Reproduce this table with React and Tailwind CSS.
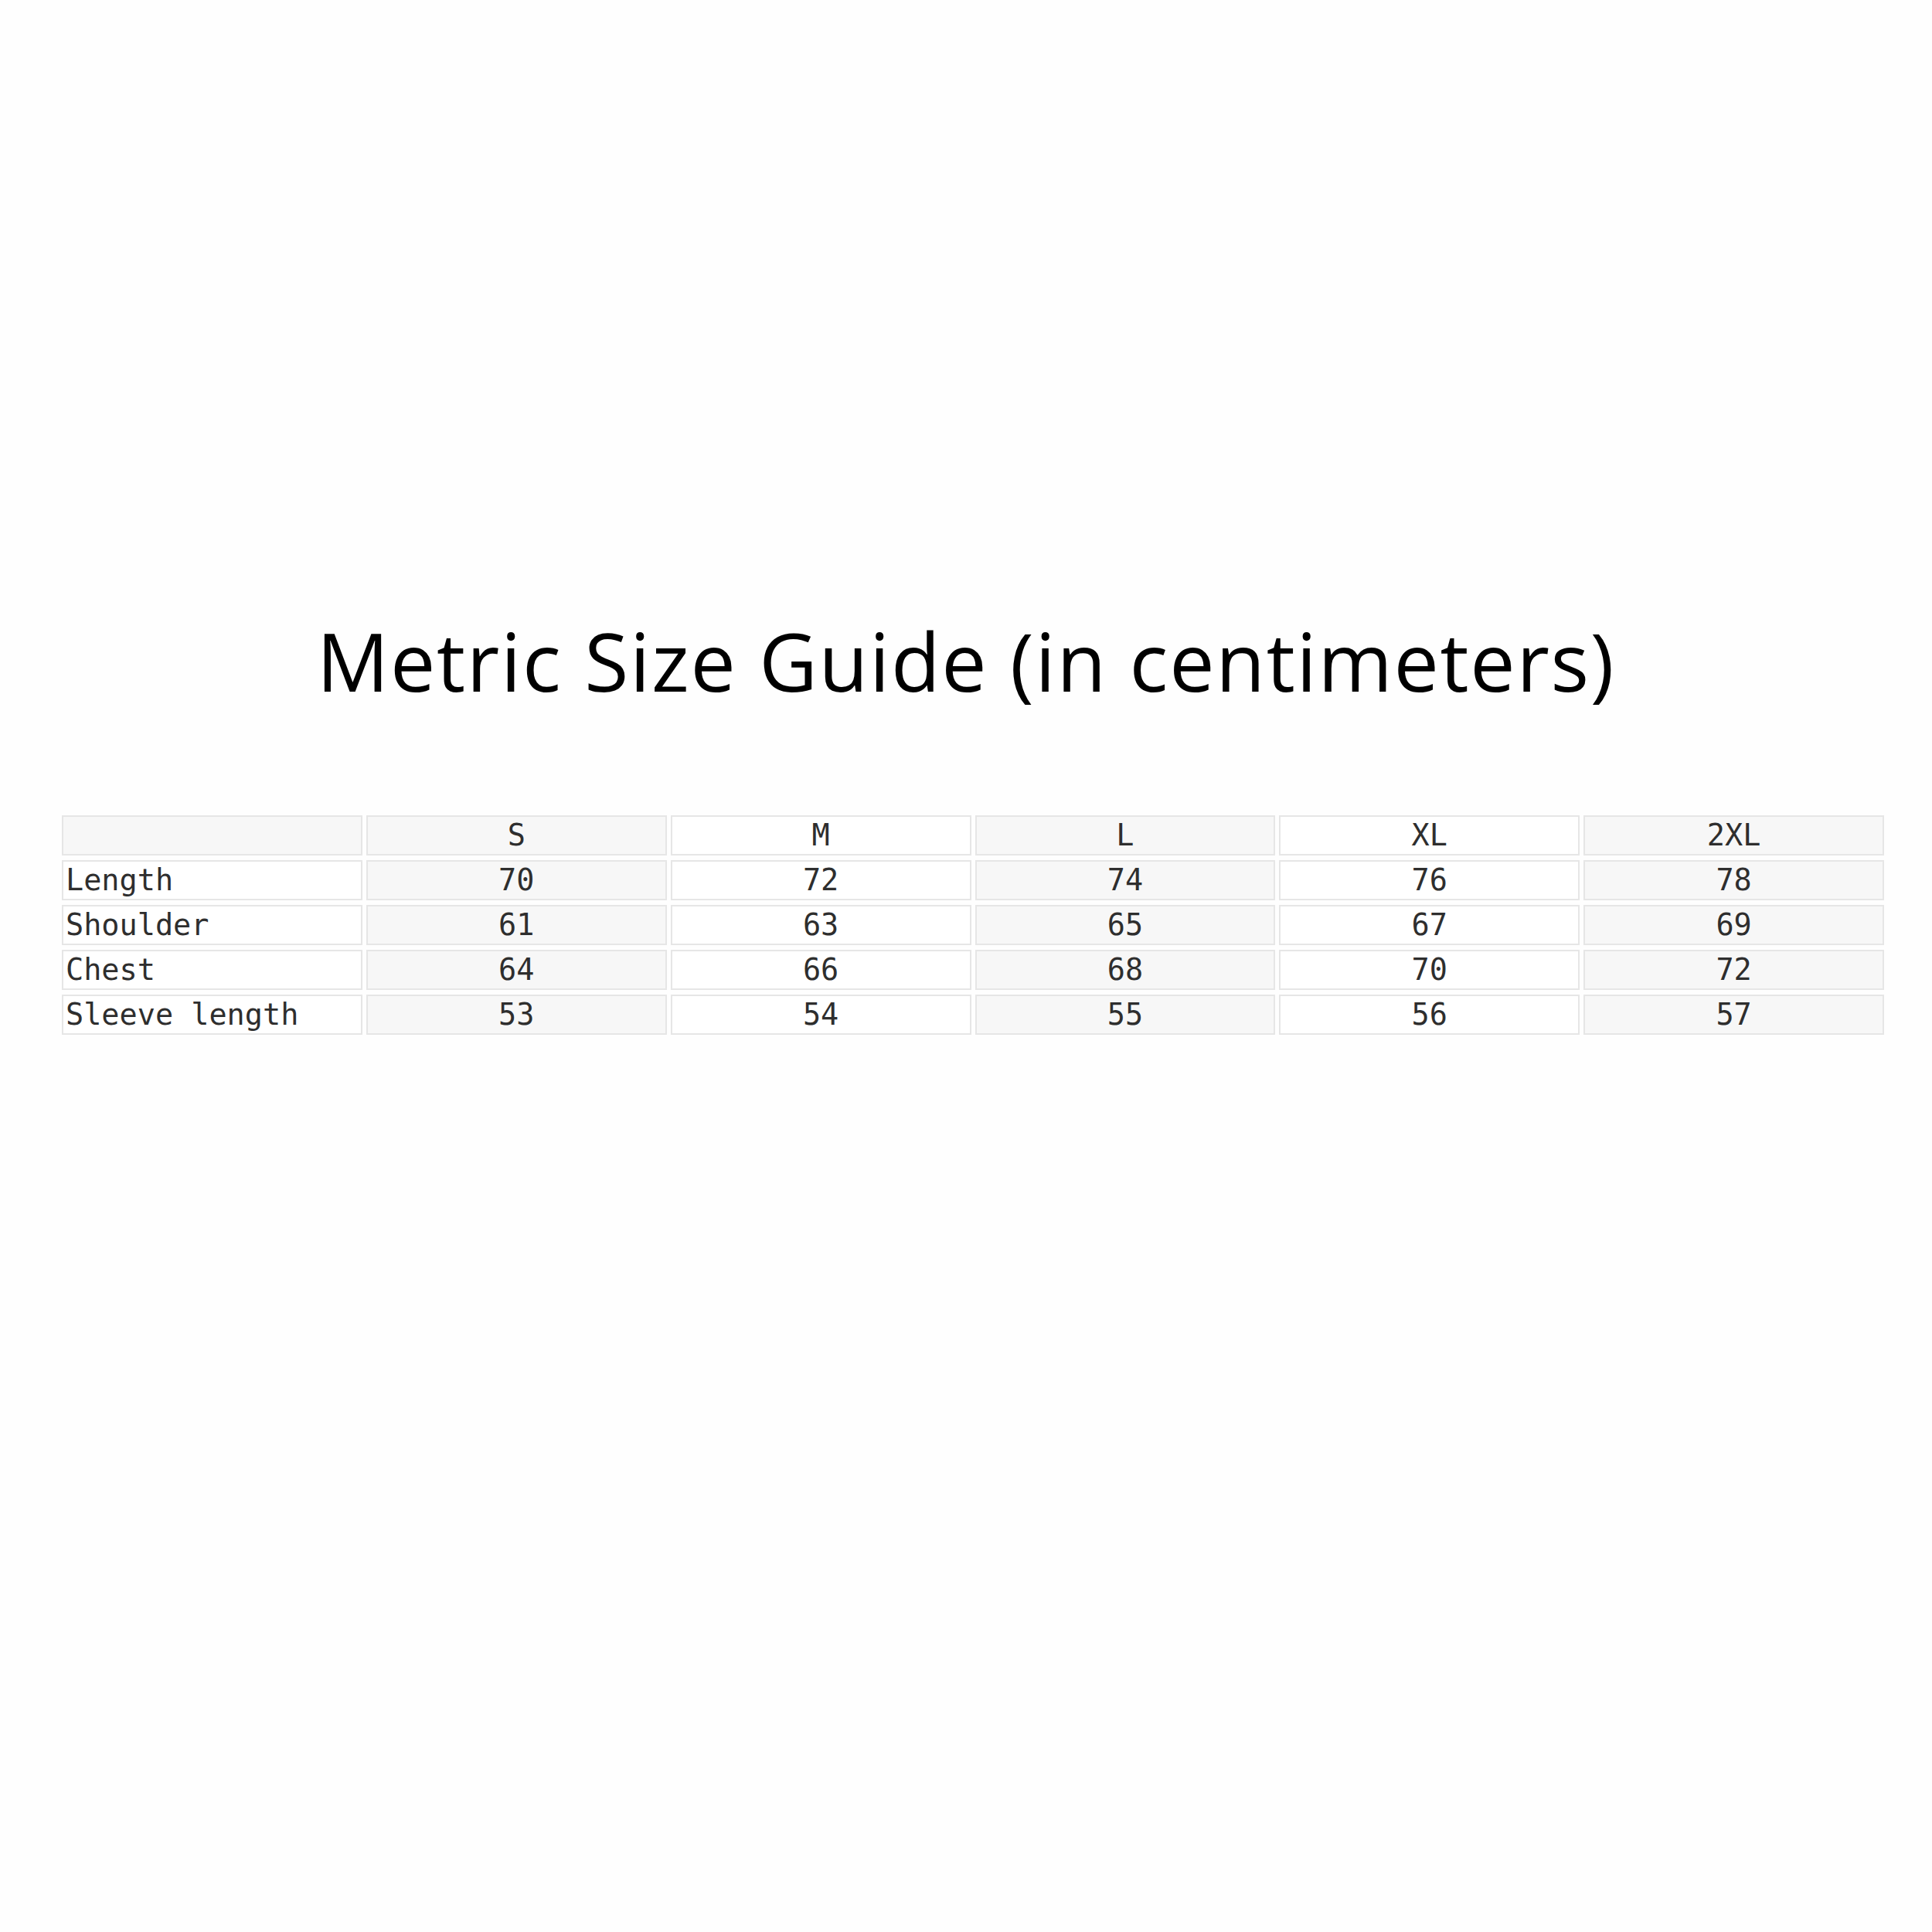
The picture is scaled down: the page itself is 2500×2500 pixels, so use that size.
const sizes = ['S', 'M', 'L', 'XL', '2XL'];

const rows = [
  { label: 'Length', values: [70, 72, 74, 76, 78] },
  { label: 'Shoulder', values: [61, 63, 65, 67, 69] },
  { label: 'Chest', values: [64, 66, 68, 70, 72] },
  { label: 'Sleeve length', values: [53, 54, 55, 56, 57] },
];

function Cell({ children, shaded, left }) {
  return (
    <div
      className={`h-[52px] flex items-center border-2 border-[#e6e6e6] ${shaded ? 'bg-[#f7f7f7]' : 'bg-white'} ${left ? 'justify-start pl-[3px]' : 'justify-center'}`}
    >
      {children}
    </div>
  );
}

export default function App() {
  return (
    <div className="w-[2500px] h-[2500px] bg-[#fefefe] flex flex-col items-center">
      {/* Title */}
      <h1
        className="mt-[803px] text-[104px] leading-none tracking-[1.7px] text-black"
        style={{ fontFamily: '"Open Sans", sans-serif' }}
      >
        Metric Size Guide (in centimeters)
      </h1>

      {/* Size table */}
      <div
        className="mt-[148px] self-start ml-[80px] w-[2358px] grid grid-cols-6 gap-x-[5px] gap-y-[6px] text-[38.5px] text-[#2e2e2e]"
        style={{ fontFamily: '"DejaVu Sans Mono", monospace' }}
      >
        <Cell shaded left />
        {sizes.map((s, i) => (
          <Cell key={s} shaded={i % 2 === 0}>
            {s}
          </Cell>
        ))}
        {rows.map((row) => (
          <>
            <Cell key={row.label} left>
              {row.label}
            </Cell>
            {row.values.map((v, i) => (
              <Cell key={row.label + i} shaded={i % 2 === 0}>
                {v}
              </Cell>
            ))}
          </>
        ))}
      </div>
    </div>
  );
}
